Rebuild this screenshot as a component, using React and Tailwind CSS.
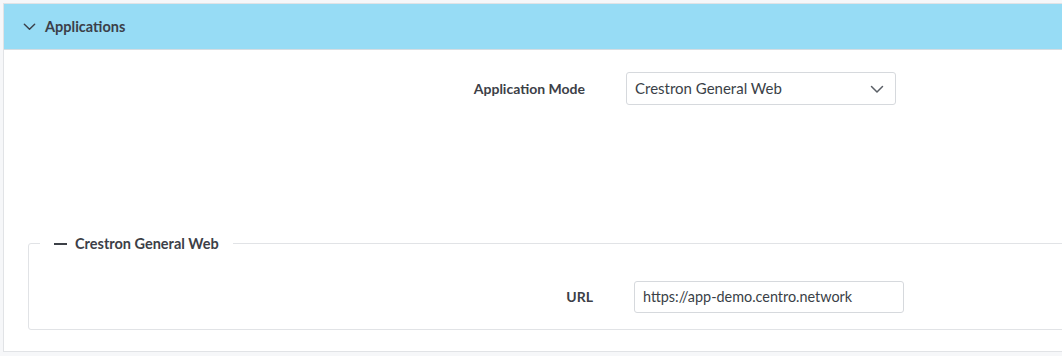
import React from 'react';

function Chevron({ className }) {
  return (
    <svg className={className} viewBox="0 0 16 16" fill="none" stroke="currentColor" strokeWidth={1.5} strokeLinecap="round" strokeLinejoin="round">
      <path d="M2.5 5.5L8 11l5.5-5.5" />
    </svg>
  );
}

export default function App() {
  return (
    <div className="w-[1062px] h-[356px] bg-[#f6f7f9] pt-[3px] pl-[3px] overflow-hidden font-['Lato','Liberation_Sans',sans-serif]">
      <div className="h-[349px] bg-white border-l border-t border-b border-[#e1e3e6] overflow-hidden flex flex-col">
        <div className="h-[46px] shrink-0 bg-[#97dcf5] border-b border-[#d5dde2] flex items-center pl-[18px] gap-[8px] text-[#3b4049]">
          <Chevron className="w-[15px] h-[15px]" />
          <span className="text-[14.5px] font-bold pt-[1px]">Applications</span>
        </div>

        <div className="pt-[22px] flex items-center">
          <label className="w-[581px] text-right text-[14px] font-bold text-[#3c4047]">Application Mode</label>
          <div className="ml-[41px] w-[270px] h-[33px] border border-[#d6d9dd] rounded-[3px] flex items-center justify-between pl-[8px] pr-[10px] text-[15px] text-[#3a3f47]">
            <span>Crestron General Web</span>
            <Chevron className="w-[16px] h-[16px] text-[#5a5f66]" />
          </div>
        </div>

        <fieldset className="mt-[128px] ml-[24px] w-[1060px] h-[97px] shrink-0 border border-[#e1e3e6] rounded-[3px] pl-[11px]">
          <legend className="px-[14px] flex items-center gap-[8px] text-[14.5px] font-bold text-[#3c4047]">
            <span className="w-[13px] h-[2px] bg-[#3c4047]"></span>
            <span>Crestron General Web</span>
          </legend>
          <div className="pt-[26px] flex items-center">
            <label className="w-[553px] text-right text-[14px] font-bold text-[#3c4047]">URL</label>
            <div className="ml-[41px] w-[270px] h-[32px] border border-[#d6d9dd] rounded-[3px] flex items-center pl-[8px] text-[14.4px] text-[#3a3f47]">
              https://app-demo.centro.network
            </div>
          </div>
        </fieldset>
      </div>
    </div>
  );
}
